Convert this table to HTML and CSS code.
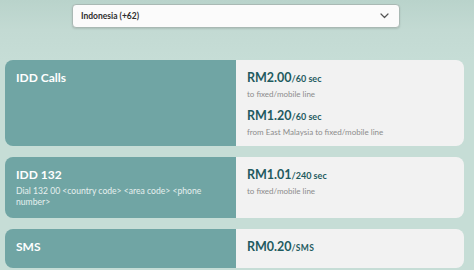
FILE: index.html
```html
<!DOCTYPE html>
<html>
<head>
<meta charset="utf-8">
<link rel="stylesheet" href="styles.css">
</head>
<body>
<div class="page">
  <div class="select">
    <span class="select-label">Indonesia (+62)</span>
    <svg class="chev" width="9" height="6" viewBox="0 0 9 6"><path d="M1 1 L4.5 4.5 L8 1" fill="none" stroke="#555" stroke-width="1.2" stroke-linecap="round" stroke-linejoin="round"/></svg>
  </div>
  <div class="cards">
    <div class="card c1">
      <div class="left"><div class="title">IDD Calls</div></div>
      <div class="right">
        <div class="price">RM2.00<span class="unit">/60 sec</span></div>
        <div class="sub">to fixed/mobile line</div>
        <div class="price p2">RM1.20<span class="unit">/60 sec</span></div>
        <div class="sub">from East Malaysia to fixed/mobile line</div>
      </div>
    </div>
    <div class="card c2">
      <div class="left">
        <div class="title">IDD 132</div>
        <div class="desc">Dial 132 00 &lt;country code&gt; &lt;area code&gt; &lt;phone number&gt;</div>
      </div>
      <div class="right">
        <div class="price">RM1.01<span class="unit">/240 sec</span></div>
        <div class="sub">to fixed/mobile line</div>
      </div>
    </div>
    <div class="card c3">
      <div class="left"><div class="title">SMS</div></div>
      <div class="right">
        <div class="price">RM0.20<span class="unit sms">/SMS</span></div>
      </div>
    </div>
  </div>
</div>
</body>
</html>
```
FILE: styles.css
```css
html, body {
  margin: 0;
  padding: 0;
}
body {
  width: 474px;
  height: 270px;
  overflow: hidden;
  font-family: Lato, "Open Sans", sans-serif;
  background: linear-gradient(180deg, #b9d3cb 0px, #c3dad3 30px, #c6ddd6 60px, #c6ddd6 100%);
}
.page {
  padding: 4px 0 0 5px;
  width: 459px;
}
.select {
  margin-left: 67px;
  width: 328px;
  height: 24px;
  box-sizing: border-box;
  background: #fbfbfb;
  border: 1px solid #a9b9b4;
  border-radius: 4px;
  box-shadow: 0 1px 2px rgba(0,0,0,0.12);
  display: flex;
  align-items: center;
  justify-content: space-between;
  padding: 0 10px 0 8px;
}
.select-label {
  font-size: 8.5px;
  font-weight: 700;
  color: #2e2e2e;
}
.chev {
  display: block;
}
.cards {
  margin-top: 32px;
  display: flex;
  flex-direction: column;
  gap: 11px;
}
.card {
  display: grid;
  grid-template-columns: 231px 1fr;
  border-radius: 8px;
  overflow: hidden;
}
.left {
  background: #70a5a4;
  padding: 11px 11px 10px 11px;
  color: #ffffff;
}
.right {
  background: #f2f2f2;
  padding: 11px 11px 10px 11px;
}
.title {
  font-size: 12px;
  line-height: 14px;
  font-weight: 700;
}
.desc {
  margin-top: 4px;
  font-size: 8.6px;
  line-height: 11px;
  color: #e6f0ef;
  padding-right: 20px;
}
.price {
  font-size: 12.5px;
  line-height: 14px;
  font-weight: 700;
  color: #1f5b5f;
}
.unit {
  font-size: 9px;
}
.unit.sms {
  font-size: 8.5px;
  letter-spacing: 0.3px;
}
.sub {
  margin-top: 3px;
  font-size: 8px;
  line-height: 10px;
  color: #8c8c8c;
}
.p2 {
  margin-top: 10px;
}
.c1 .right {
  padding-bottom: 9px;
}
.c3 .left, .c3 .right {
  padding-bottom: 13px;
}
```
